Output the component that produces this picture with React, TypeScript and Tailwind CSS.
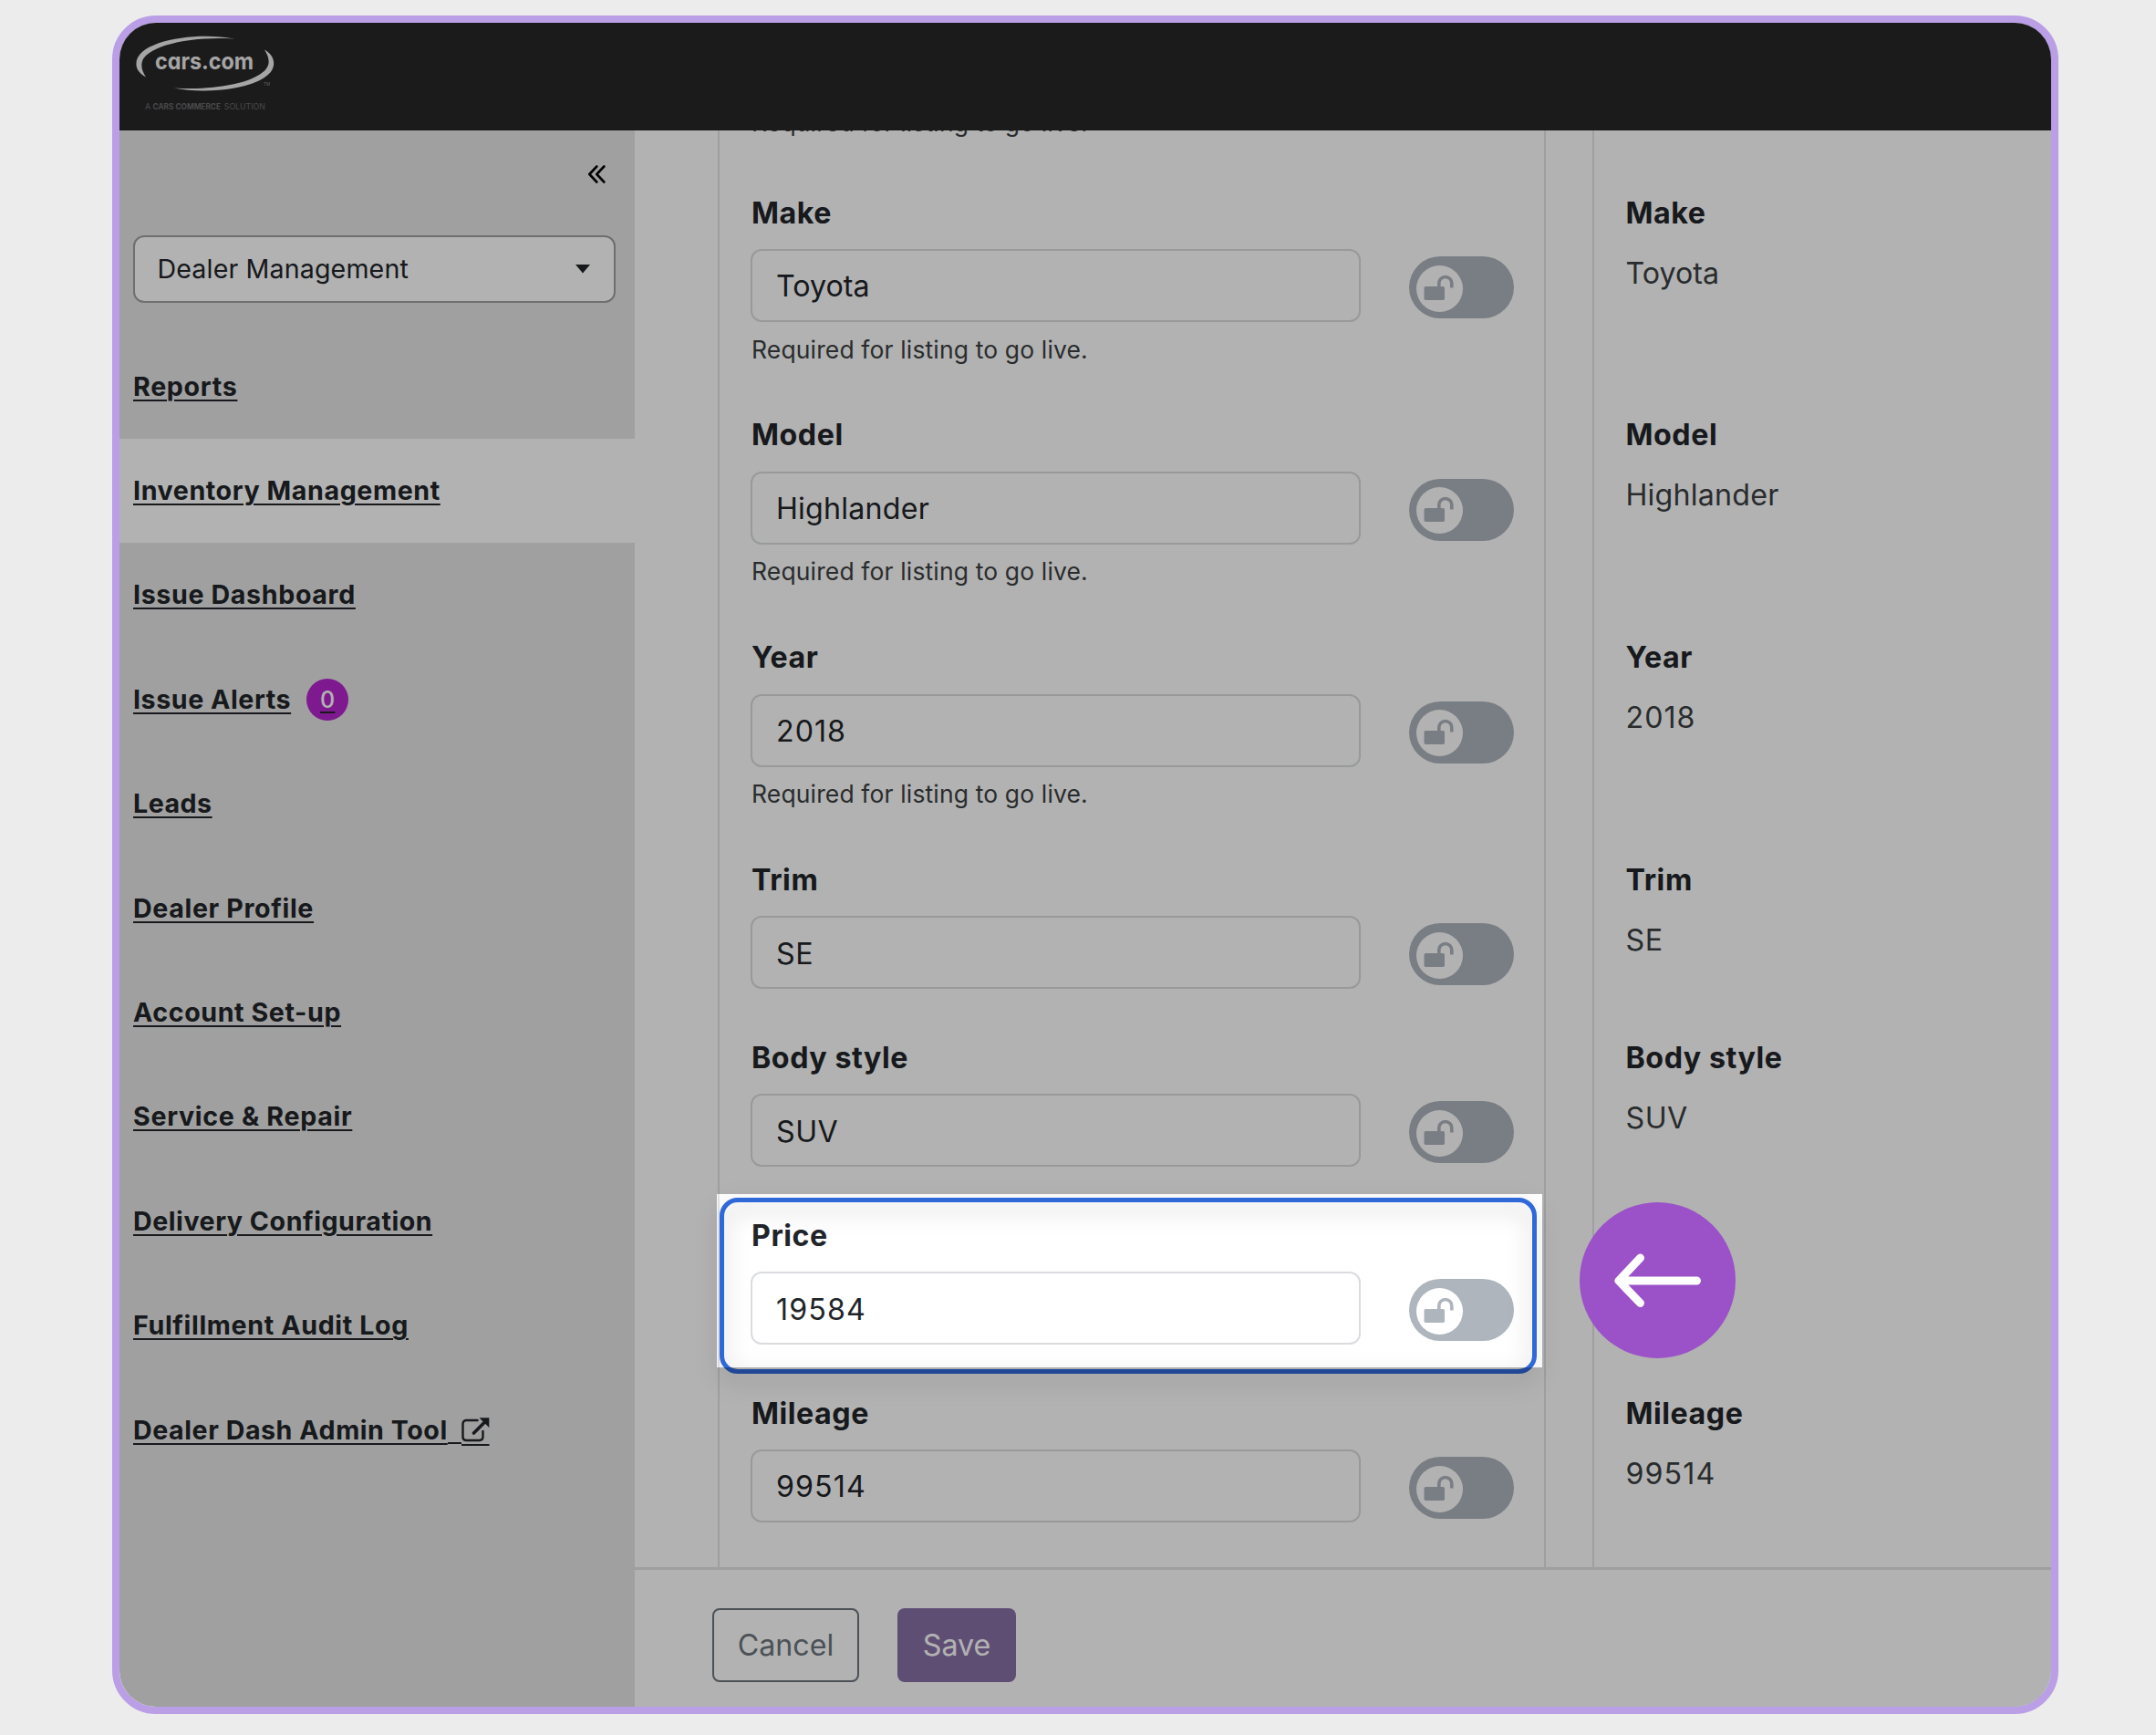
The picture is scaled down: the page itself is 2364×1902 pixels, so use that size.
import React from "react";

const navItems: { label: string; active?: boolean; badge?: string; external?: boolean; track: string }[] = [
  { label: "Reports", track: "tracking-[0.7px]" },
  { label: "Inventory Management", active: true, track: "tracking-[0.6px]" },
  { label: "Issue Dashboard", track: "tracking-[0.65px]" },
  { label: "Issue Alerts", badge: "0", track: "tracking-[0.57px]" },
  { label: "Leads", track: "tracking-[0.5px]" },
  { label: "Dealer Profile", track: "tracking-[0.65px]" },
  { label: "Account Set-up", track: "tracking-[0.6px]" },
  { label: "Service & Repair", track: "tracking-[0.7px]" },
  { label: "Delivery Configuration", track: "tracking-[0.55px]" },
  { label: "Fulfillment Audit Log", track: "tracking-[0.65px]" },
  { label: "Dealer Dash Admin Tool", external: true, track: "tracking-[0.56px]" },
];

const fields: { label: string; value: string; required?: boolean; track: string }[] = [
  { label: "Make", value: "Toyota", required: true, track: "tracking-normal" },
  { label: "Model", value: "Highlander", required: true, track: "tracking-[0.2px]" },
  { label: "Year", value: "2018", required: true, track: "tracking-[1px]" },
  { label: "Trim", value: "SE", track: "tracking-[0.5px]" },
  { label: "Body style", value: "SUV", track: "tracking-[0.5px]" },
  { label: "Price", value: "19584", track: "tracking-[1.1px]" },
  { label: "Mileage", value: "99514", track: "tracking-[1.1px]" },
];

const helpText = "Required for listing to go live.";

function Logo() {
  return (
    <svg className="ml-[16px] mt-[11px] block h-[92px] w-[160px]" viewBox="147 36 160 92">
      <g fill="#ededed">
        <path d="M257 42.600 C217 34.500 149.400 44 149.400 70 C149.400 76 153 80.500 160 84.500 C156.500 79 155 75 155.400 70 C157 51 207 39.500 257 42.600Z" />
        <path d="M191 96.500 C232 105 300.200 95 300.200 69.500 C300.200 63.500 297 58.500 290 54.500 C293.500 60 294.800 64 294.600 68.500 C293.500 87.500 243 100 191 96.500Z" />
      </g>
      <text x="170" y="76" fill="#ededed" fontFamily="Inter, sans-serif" fontWeight="700" fontSize="25.800" textLength="108" lengthAdjust="spacingAndGlyphs" style={{ fontFeatureSettings: '"cv11"' }}>
        cars.com
      </text>
      <text x="289" y="94" fill="#8a8a8a" fontFamily="Inter, sans-serif" fontSize="4.500">TM</text>
      <g fill="#6a6a6c" fontFamily="Inter, sans-serif">
        <text x="159" y="119.500" fontSize="9">A</text>
        <text x="167.500" y="119.500" fontSize="8.800" fontWeight="700" textLength="74.500" lengthAdjust="spacingAndGlyphs">CARS COMMERCE</text>
        <text x="245.800" y="119.500" fontSize="8.800" textLength="45" lengthAdjust="spacingAndGlyphs">SOLUTION</text>
      </g>
    </svg>
  );
}

function ExternalIcon() {
  return (
    <svg className="block h-[40px] w-[46px]" viewBox="0 0 46 40" fill="none" stroke="#212529">
      <path d="M32.500 9H20.500Q16.500 9 16.500 13V27Q16.500 31 20.500 31H34.500Q38.500 31 38.500 27V21" strokeWidth="2.400" strokeLinecap="round" />
      <path d="M28.500 23L41 10.500" strokeWidth="3.600" strokeLinecap="round" />
      <path d="M34.500 6.200H45.300V17Z" fill="#212529" stroke="none" />
      <path d="M0 34H15M15 36H45.500" strokeWidth="2" />
    </svg>
  );
}

function Toggle() {
  return (
    <div className="mt-[8px] ml-[53px] flex h-[68px] w-[115px] shrink-0 items-center rounded-full bg-[#aeb5bd] pl-[8px]">
      <div className="mt-[2px] flex size-[51px] items-center justify-center rounded-full bg-white">
        <svg className="block size-[51px]" viewBox="0 0 51 51">
          <rect x="8.500" y="23" width="22.500" height="15" rx="1.800" fill="#aeb5bd" />
          <path d="M24.800 24V19.500A7 7 0 0 1 38.800 19.500V24.500" fill="none" stroke="#aeb5bd" strokeWidth="3.600" />
        </svg>
      </div>
    </div>
  );
}

function Sidebar() {
  return (
    <aside className="w-[565px] shrink-0 bg-[#e5e5e5] text-[28.600px] text-[#212529]">
      <div className="flex h-[115px] justify-end pt-[38px] pr-[32px]">
        <svg className="block h-[20px] w-[20px]" viewBox="0 0 20 20" fill="none" stroke="#000" strokeWidth="2.600" strokeLinecap="round" strokeLinejoin="round">
          <path d="M10.300 1.500L2.300 10L10.300 18.500M18.300 1.500L10.300 10L18.300 18.500" />
        </svg>
      </div>
      <div className="ml-[14.500px] flex h-[74px] w-[529.500px] items-center justify-between rounded-[12px] border-[2px] border-[#9f9f9f] bg-white pr-[25px] pl-[25px]">
        <span className="pt-[1px] tracking-[0.14px]">Dealer Management</span>
        <svg className="block h-[10px] w-[18px]" viewBox="0 0 18 10">
          <path d="M1 0H17L9 9.500Z" fill="#212529" />
        </svg>
      </div>
      <nav className="pt-[34.400px]">
        {navItems.map((n) => (
          <a
            key={n.label}
            className={
              "flex h-[114.400px] items-center pt-[1px] pl-[15px] font-bold whitespace-nowrap underline decoration-[2px] underline-offset-[4px] " +
              (n.active ? "bg-white" : "")
            }
          >
            <span className={n.track}>{n.label}</span>
            {n.badge && (
              <span className="ml-[17px] flex size-[46px] items-center justify-center rounded-full bg-[#b525cd] text-[25px] font-medium text-white underline decoration-[#212529] decoration-[2px] underline-offset-[4px]">
                {n.badge}
              </span>
            )}
            {n.external && <ExternalIcon />}
          </a>
        ))}
      </nav>
    </aside>
  );
}

function EditColumn() {
  return (
    <section className="w-[908px] shrink-0 border-x-[2px] border-[#e4e4e4] pl-[34px]">
      <div className="-mt-[25px] h-[91.500px] pl-px text-[26.500px] leading-[32px] tracking-[0.14px] text-[#3c3f42]">{helpText}</div>
      {fields.map((f) => (
        <div key={f.label} className={f.required ? "h-[243.800px]" : "h-[194.900px]"}>
          <div className="h-[48px] pl-px text-[32.200px] leading-[48px] font-bold tracking-[0.55px]">{f.label}</div>
          <div className="mt-[15.500px] flex">
            <div className="flex h-[80px] w-[669px] shrink-0 items-center rounded-[12px] border-[2px] border-[#dadcdf] bg-white pt-[3px] pl-[26px] text-[32.200px]">
              <span className={f.track}>{f.value}</span>
            </div>
            <Toggle />
          </div>
          {f.required && (
            <div className="mt-[13.500px] pl-px text-[26.500px] leading-[32px] tracking-[0.14px] text-[#3c3f42]">{helpText}</div>
          )}
        </div>
      ))}
    </section>
  );
}

function SourceColumn() {
  return (
    <section className="ml-[51px] grow border-l-[2px] border-[#e4e4e4] pt-[66.500px] pl-[34.500px]">
      {fields.map((f) => (
        <div key={f.label} className={f.required ? "h-[243.800px]" : "h-[194.900px]"}>
          <div className="h-[48px] text-[32.200px] leading-[48px] font-bold tracking-[0.55px]">{f.label}</div>
          <div className="mt-[18px] h-[48px] text-[32.200px] leading-[48px] text-[#3c3f42]">
            <span className={f.track}>{f.value}</span>
          </div>
        </div>
      ))}
    </section>
  );
}

export default function App() {
  return (
    <div className="h-[1902px] w-[2364px] overflow-hidden bg-[#ececec] pt-[17px] pl-[123px] font-['Inter',sans-serif]">
      <div className="relative flex h-[1862px] w-[2134px] flex-col overflow-hidden rounded-[48px] border-[8px] border-[#ba9ee6] bg-white">
        <header className="h-[118px] shrink-0 bg-[#282828]">
          <Logo />
        </header>
        <div className="flex min-h-0 grow">
          <Sidebar />
          <main className="flex min-w-0 grow flex-col text-[#212529]">
            <div className="flex h-[1575px] shrink-0 overflow-hidden pl-[91px]">
              <EditColumn />
              <SourceColumn />
            </div>
            <footer className="flex grow gap-[42px] border-t-[3px] border-[#e4e4e4] pt-[41.500px] pl-[85px] text-[32.200px]">
              <button className="flex h-[81px] w-[161px] items-center justify-center rounded-[8px] border-[2px] border-[#6c757d] pt-[2px] text-[#6c757d]">
                Cancel
              </button>
              <button className="flex h-[81px] w-[130px] items-center justify-center rounded-[8px] bg-[#8970a7] pt-[2px] text-white">
                Save
              </button>
            </footer>
          </main>
        </div>

        {/* Callout outline around the price field */}
        <div className="absolute top-[1288px] left-[658px] h-[193px] w-[896px] rounded-[20px] border-[5px] border-[#2f68d8] drop-shadow-[0_8px_12px_rgba(0,0,0,0.25)]" />
        {/* Spotlight: everything outside this rectangle is dimmed */}
        <div className="absolute top-[1284px] left-[655px] h-[190px] w-[905px] shadow-[0_0_0_2400px_rgba(0,0,0,0.303)]" />
        {/* Arrow marker */}
        <div className="absolute top-[1293px] left-[1601px] size-[171px] rounded-full bg-[#9b51c8]">
          <svg className="block size-[171px]" viewBox="0 0 171 171" fill="none" stroke="#fff" strokeWidth="9" strokeLinecap="round" strokeLinejoin="round">
            <path d="M66.500 61L43 86L66.500 110.500M43 86H128.500" />
          </svg>
        </div>
      </div>
    </div>
  );
}
